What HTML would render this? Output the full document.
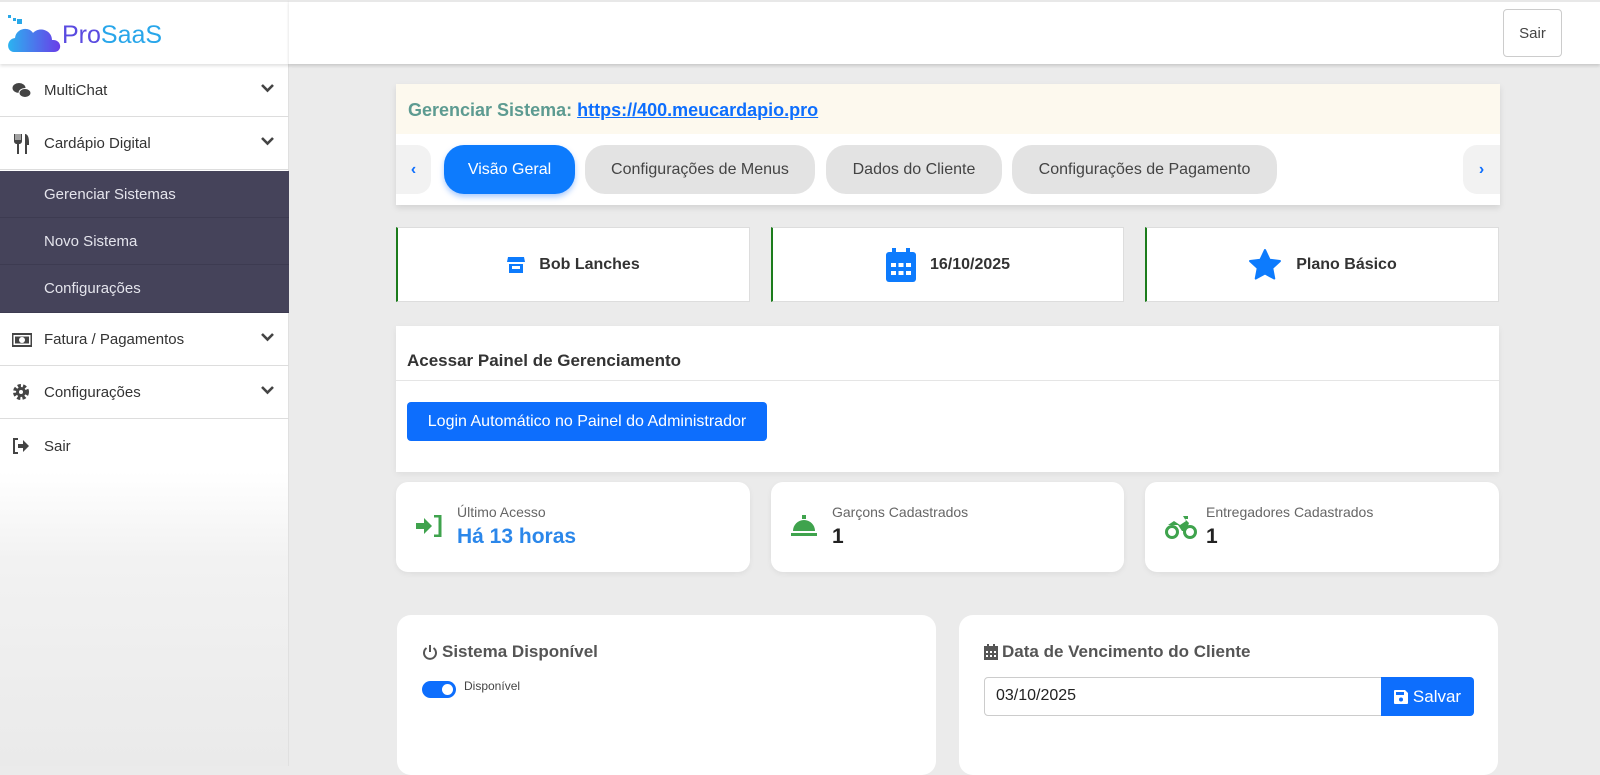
<!DOCTYPE html>
<html><head><meta charset="utf-8"><style>
*{box-sizing:border-box;margin:0;padding:0}
body{width:1600px;height:766px;overflow:hidden;background:#ebebeb;font-family:"Liberation Sans",sans-serif;position:relative}
.abs{position:absolute}
#side{left:0;top:0;width:289px;height:766px;background:linear-gradient(#fff 0,#fff 472px,#f2f2f2 560px,#eaeaea 766px);border-right:1px solid #e0e0e0}
#top{left:289px;top:0;width:1311px;height:64px;background:#fff;box-shadow:0 2px 3px rgba(0,0,0,.15);border-top:2px solid #e8e8e8}
.logo{left:0;top:0;width:289px;height:64px;background:#fff;box-shadow:0 2px 3px rgba(0,0,0,.12);border-top:2px solid #e8e8e8}
.mi{position:absolute;left:0;width:289px;height:53px;border-bottom:1px solid #ddd;font-size:15px;color:#333;display:flex;align-items:center;padding-left:44px}
.mi .ic{position:absolute;left:12px;top:17px;width:20px;height:20px}
.mi .ch{position:absolute;right:14px;top:19px}
.sub{position:absolute;left:0;width:289px;height:47px;background:#45435a;color:#e4e4ec;font-size:15px;display:flex;align-items:center;padding-left:44px;border-bottom:1px solid #3d3b51}
.card{position:absolute;background:#fff}
.pill{position:absolute;top:145px;height:49px;border-radius:20px;background:#e3e3e3;color:#444;font-size:16px;display:flex;align-items:center;justify-content:center}
.info{position:absolute;top:227px;height:75px;background:#fff;border:1px solid #ddd;border-left:2px solid #1c7c1c;display:flex;align-items:center;justify-content:center;font-size:16px;font-weight:bold;color:#333;gap:14px}
.stat{position:absolute;top:482px;height:90px;background:#fff;border-radius:12px;box-shadow:0 2px 6px rgba(0,0,0,.06)}
.stat .l{position:absolute;left:61px;top:22px;font-size:14px;color:#666}
.stat .v{position:absolute;left:61px;top:43px;font-size:21px;font-weight:bold;color:#222}
.stat svg{position:absolute;left:20px;top:33px}
</style></head><body>
<div id="side" class="abs"></div>
<div class="abs logo">
<svg class="abs" style="left:6px;top:12px" width="56" height="40" viewBox="0 0 56 40"><defs><linearGradient id="g" x1="0" x2="1"><stop offset="0" stop-color="#2bb3f0"/><stop offset="1" stop-color="#6a3de8"/></linearGradient></defs><rect x="2" y="1" width="3" height="3" fill="#29a8e8"/><rect x="7" y="4" width="3" height="3" fill="#29a8e8"/><rect x="11" y="5" width="5" height="5" fill="#29a8e8"/><path d="M8 38 C0 38 0 25 9 24 C10 14 23 12 27 19 C33 12 46 16 46 26 C56 25 57 38 48 38 Z" fill="url(#g)"/></svg>
<div class="abs" style="left:62px;top:19px;font-size:25px;color:#5a4be0;letter-spacing:0">Pro<span style="color:#28a6ea">SaaS</span></div>
</div>
<div id="top" class="abs"><div class="abs" style="right:38px;top:7px;width:59px;height:48px;border:1px solid #ccc;border-radius:4px;font-size:15px;color:#444;display:flex;align-items:center;justify-content:center;background:#fff">Sair</div></div>

<div class="mi" style="top:64px"><svg class="ic" viewBox="0 0 20 20"><ellipse cx="7" cy="7" rx="6.5" ry="5" fill="#444"/><ellipse cx="13" cy="12" rx="6" ry="4.5" fill="#444" stroke="#fff" stroke-width="1"/></svg>MultiChat<svg class="ch" width="15" height="10" viewBox="0 0 15 10"><path d="M2 2l5.5 5.5L13 2" stroke="#444" stroke-width="2.6" fill="none"/></svg></div>
<div class="mi" style="top:117px"><svg class="ic" viewBox="0 0 20 20"><path d="M2 0v7c0 2 1.5 3 3 3v10h2V10c1.5 0 3-1 3-3V0H8.5v6h-1V0h-1v6h-1V0h-1v6h-1V0z M13 0c3 0 4 4 4 8v3h-2v9h-2z" fill="#444"/></svg>Cardápio Digital<svg class="ch" width="15" height="10" viewBox="0 0 15 10"><path d="M2 2l5.5 5.5L13 2" stroke="#444" stroke-width="2.6" fill="none"/></svg></div>
<div class="sub" style="top:171px">Gerenciar Sistemas</div>
<div class="sub" style="top:218px">Novo Sistema</div>
<div class="sub" style="top:265px;height:48px">Configurações</div>
<div class="mi" style="top:313px"><svg class="ic" viewBox="0 0 20 20"><rect x="0.5" y="4" width="19" height="12" fill="none" stroke="#444" stroke-width="2"/><rect x="3" y="6.5" width="14" height="7" fill="#444"/><circle cx="10" cy="10" r="3" fill="#fff"/></svg>Fatura / Pagamentos<svg class="ch" width="15" height="10" viewBox="0 0 15 10"><path d="M2 2l5.5 5.5L13 2" stroke="#444" stroke-width="2.6" fill="none"/></svg></div>
<div class="mi" style="top:366px"><svg class="ic" viewBox="0 0 20 20"><circle cx="9" cy="9" r="6" fill="none" stroke="#444" stroke-width="4" stroke-dasharray="3 2"/><circle cx="9" cy="9" r="5" fill="#444"/><circle cx="9" cy="9" r="2" fill="#fff"/></svg>Configurações<svg class="ch" width="15" height="10" viewBox="0 0 15 10"><path d="M2 2l5.5 5.5L13 2" stroke="#444" stroke-width="2.6" fill="none"/></svg></div>
<div class="mi" style="top:420px;border-bottom:none"><svg class="ic" viewBox="0 0 20 20"><path d="M6 2H2v14h4" stroke="#444" stroke-width="2" fill="none"/><path d="M6 7h5V3l6 6-6 6v-4H6z" fill="#444"/></svg>Sair</div>

<div class="card" style="left:396px;top:84px;width:1104px;height:121px;box-shadow:0 3px 6px rgba(0,0,0,.1)">
<div style="height:50px;background:#fdf9ee;padding:16px 12px;font-size:18px;font-weight:bold;color:#5d9b91">Gerenciar Sistema: <span style="color:#0d6efd;text-decoration:underline">https://400.meucardapio.pro</span></div>
</div>
<div class="pill" style="left:396px;width:35px;border-radius:0 14px 14px 0;background:#f2f2f2;color:#0d6efd;font-weight:bold">‹</div>
<div class="pill" style="left:444px;width:131px;background:#0d7bfd;color:#fff;box-shadow:0 3px 6px rgba(13,110,253,.35)">Visão Geral</div>
<div class="pill" style="left:585px;width:230px">Configurações de Menus</div>
<div class="pill" style="left:826px;width:176px">Dados do Cliente</div>
<div class="pill" style="left:1012px;width:265px">Configurações de Pagamento</div>
<div class="pill" style="left:1463px;width:37px;border-radius:14px 0 0 14px;background:#f2f2f2;color:#0d6efd;font-weight:bold">›</div>

<div class="info" style="left:396px;width:354px"><svg width="18" height="16" viewBox="0 0 18 16"><path d="M1 0h16l1 5H0z M2 7h14v9H2z" fill="#0d7bfd"/><rect x="5" y="9" width="8" height="3" fill="#fff"/></svg>Bob Lanches</div>
<div class="info" style="left:771px;width:353px"><svg width="30" height="34" viewBox="0 0 30 34"><rect x="0" y="4" width="30" height="30" rx="3" fill="#0d7bfd"/><rect x="6" y="0" width="4" height="8" fill="#0d7bfd"/><rect x="20" y="0" width="4" height="8" fill="#0d7bfd"/><g fill="#fff"><rect x="5" y="15" width="5" height="4"/><rect x="12.5" y="15" width="5" height="4"/><rect x="20" y="15" width="5" height="4"/><rect x="5" y="23" width="5" height="4"/><rect x="12.5" y="23" width="5" height="4"/><rect x="20" y="23" width="5" height="4"/></g></svg>16/10/2025</div>
<div class="info" style="left:1145px;width:354px"><svg width="34" height="34" viewBox="0 0 24 24"><path d="M12 1.5l3.2 6.8 7.3.9-5.4 5 1.4 7.3L12 18l-6.5 3.5 1.4-7.3-5.4-5 7.3-.9z" fill="#0d7bfd" stroke="#0d7bfd" stroke-linejoin="round" stroke-width="1.5"/></svg>Plano Básico</div>

<div class="card" style="left:396px;top:326px;width:1103px;height:146px;box-shadow:0 2px 6px rgba(0,0,0,.06)">
<div style="padding:25px 11px 0;font-size:17px;font-weight:bold;color:#333;height:55px;border-bottom:1px solid #e5e5e5">Acessar Painel de Gerenciamento</div>
<div class="abs" style="left:11px;top:76px;width:360px;height:39px;background:#0d6efd;border-radius:4px;color:#fff;font-size:16px;display:flex;align-items:center;justify-content:center">Login Automático no Painel do Administrador</div>
</div>

<div class="stat" style="left:396px;width:354px"><svg width="28" height="22" viewBox="0 0 28 22"><path d="M0 8h8V3l8 8-8 8v-5H0z" fill="#3fa34d"/><path d="M18 1h6v20h-6" stroke="#3fa34d" stroke-width="3" fill="none"/></svg><div class="l">Último Acesso</div><div class="v" style="color:#2b87ea">Há 13 horas</div></div>
<div class="stat" style="left:771px;width:353px"><svg width="26" height="22" viewBox="0 0 26 22"><rect x="11" y="0" width="4" height="4" fill="#3fa34d"/><path d="M2 16a11 11 0 0 1 22 0z" fill="#3fa34d"/><rect x="0" y="18" width="26" height="3" fill="#3fa34d"/></svg><div class="l">Garçons Cadastrados</div><div class="v">1</div></div>
<div class="stat" style="left:1145px;width:354px"><svg width="32" height="24" viewBox="0 0 32 24"><circle cx="7" cy="17" r="5.5" fill="none" stroke="#3fa34d" stroke-width="3"/><circle cx="25" cy="17" r="5.5" fill="none" stroke="#3fa34d" stroke-width="3"/><path d="M3 10h10l4 6h4l3-8-4-4h3v-3h-5l3 5-6 4-6-4z" fill="#3fa34d"/></svg><div class="l">Entregadores Cadastrados</div><div class="v">1</div></div>

<div class="card" style="left:397px;top:615px;width:539px;height:160px;border-radius:14px">
<div class="abs" style="left:25px;top:27px;font-size:17px;font-weight:bold;color:#555;display:flex;align-items:center;gap:4px"><svg width="16" height="17" viewBox="0 0 16 17"><path d="M4.5 4a6 6 0 1 0 7 0" stroke="#555" stroke-width="2" fill="none"/><path d="M8 1v7" stroke="#555" stroke-width="2"/></svg>Sistema Disponível</div>
<div class="abs" style="left:25px;top:66px;width:34px;height:17px;border-radius:9px;background:#0d6efd"><div class="abs" style="right:3px;top:3px;width:11px;height:11px;border-radius:50%;background:#fff"></div></div>
<div class="abs" style="left:67px;top:64px;font-size:12px;color:#444">Disponível</div>
</div>
<div class="card" style="left:959px;top:615px;width:539px;height:160px;border-radius:14px">
<div class="abs" style="left:25px;top:27px;font-size:17px;font-weight:bold;color:#555;display:flex;align-items:center;gap:4px"><svg width="14" height="16" viewBox="0 0 14 16"><rect x="0" y="2" width="14" height="14" fill="#555"/><rect x="3" y="0" width="2" height="4" fill="#555"/><rect x="9" y="0" width="2" height="4" fill="#555"/><g fill="#fff"><rect x="2" y="7" width="2" height="2"/><rect x="6" y="7" width="2" height="2"/><rect x="10" y="7" width="2" height="2"/><rect x="2" y="11" width="2" height="2"/><rect x="6" y="11" width="2" height="2"/><rect x="10" y="11" width="2" height="2"/></g></svg>Data de Vencimento do Cliente</div>
<div class="abs" style="left:25px;top:62px;width:398px;height:39px;border:1px solid #ccc;border-radius:4px 0 0 4px;font-size:16px;color:#222;padding:9px 11px">03/10/2025</div>
<div class="abs" style="left:422px;top:62px;width:93px;height:39px;background:#0d6efd;border-radius:0 4px 4px 0;color:#fff;font-size:17px;display:flex;align-items:center;justify-content:center;gap:5px"><svg width="14" height="14" viewBox="0 0 14 14"><path d="M0 1a1 1 0 0 1 1-1h10l3 3v10a1 1 0 0 1-1 1H1a1 1 0 0 1-1-1z" fill="#fff"/><rect x="2" y="2" width="8" height="3" fill="#0d6efd"/><circle cx="7" cy="9.5" r="2" fill="#0d6efd"/></svg>Salvar</div>
</div>
</body></html>
